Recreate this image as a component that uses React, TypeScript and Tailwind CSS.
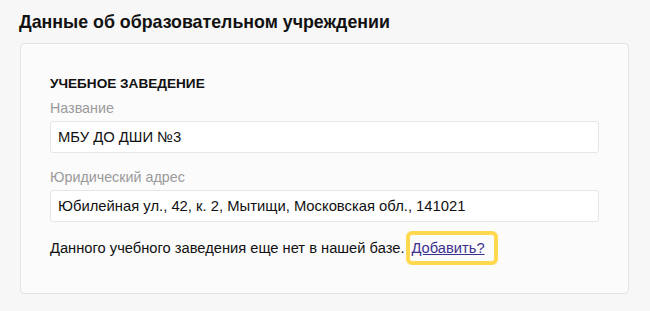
import React from "react";

export default function App() {
  return (
    <div className="w-[650px] h-[311px] bg-[#f7f7f7] font-['Liberation_Sans',Arial,sans-serif] text-[#111] overflow-hidden">
      <div className="px-[20px] pt-[11px]">
        <h2 className="text-[17.8px] font-bold leading-[22px] ml-[-1px]">
          Данные об образовательном учреждении
        </h2>

        {/* Institution card */}
        <div className="mt-[10px] w-[609px] h-[251px] bg-[#fbfbfb] border border-[#e4e4e4] rounded-[4px] px-[29px] pt-[32px]">
          <div className="text-[13.6px] font-bold leading-[16px]">УЧЕБНОЕ ЗАВЕДЕНИЕ</div>

          <label className="block mt-[7px] text-[14.3px] leading-[18px] text-[#9a9a9a]">Название</label>
          <div className="mt-[4px] h-[32px] bg-white border border-[#e6e6e6] rounded-[3px] px-[7px] flex items-center text-[14.8px]">
            МБУ ДО ДШИ №3
          </div>

          <label className="block mt-[15px] text-[14.3px] leading-[18px] text-[#9a9a9a]">Юридический адрес</label>
          <div className="mt-[4px] h-[32px] bg-white border border-[#e6e6e6] rounded-[3px] px-[7px] flex items-center text-[14.8px]">
            Юбилейная ул., 42, к. 2, Мытищи, Московская обл., 141021
          </div>

          <div className="mt-[9px] flex items-center text-[14.7px]">
            <span>Данного учебного заведения еще нет в нашей базе.</span>
            <span className="ml-[2px] border-[4px] border-[#ffd84d] rounded-[6px] pl-[1px] pr-[9px] h-[34px] flex items-center">
              <a href="#" className="underline text-[#3c2f8f]">Добавить?</a>
            </span>
          </div>
        </div>
      </div>
    </div>
  );
}
